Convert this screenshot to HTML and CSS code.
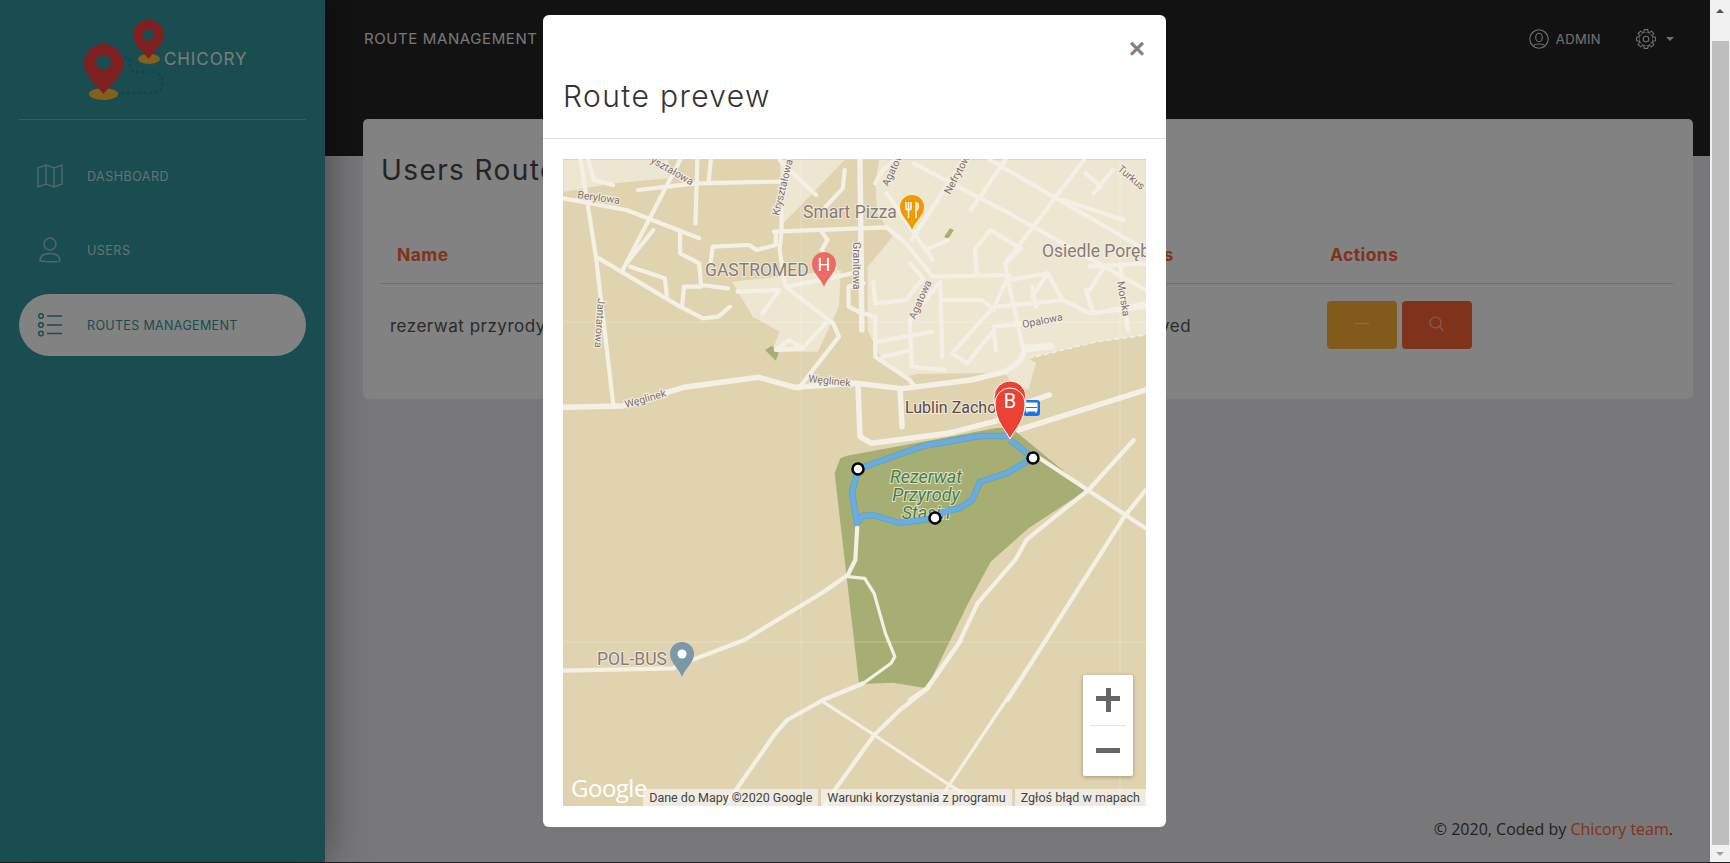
FILE: index.html
```html
<!DOCTYPE html>
<html lang="pl">
<head>
  <meta charset="UTF-8" />
  <title>Chicory - Routes management</title>
  <link rel="stylesheet" href="styles.css">
</head>
<body>
  <div class="window">
    <div class="app">
      <aside class="sidebar">
        <div class="logo">
          <svg class="logo-mark" viewBox="84 20 82 80" width="82" height="80">
            <path class="logo-dots" d="M124 58C134 54 126 71 136 72H154C166 73 166 92 152 93H122"/>
            <ellipse class="logo-base" cx="103.500" cy="94" rx="14.500" ry="6"/>
            <ellipse class="logo-base" cx="149" cy="59" rx="11" ry="5"/>
            <path class="logo-pin" d="M103.500 44C114.500 44 123.500 53 123.500 64C123.500 74 110 86 103.500 94C97 86 84 74 84 64C84 53 92.500 44 103.500 44ZM103.500 55A7.500 7.500 0 1 0 103.500 70A7.500 7.500 0 1 0 103.500 55Z"/>
            <path class="logo-pin" d="M148.500 20C157 20 164 27 164 35C164 44 154 52 148.500 59C143 52 133 44 133 35C133 27 140 20 148.500 20ZM148.500 29.500A5.500 5.500 0 1 0 148.500 40.500A5.500 5.500 0 1 0 148.500 29.500Z"/>
          </svg>
          <span class="logo-name">CHICORY</span>
        </div>
        <nav class="side-nav">
          <a class="side-link">
            <svg class="side-icon" viewBox="0 0 26 24"><path d="M1 4 9 1 17 4 25 1V20L17 23 9 20 1 23ZM9 1V20M17 4V23"/></svg>
            DASHBOARD
          </a>
          <a class="side-link">
            <svg class="side-icon" viewBox="0 0 26 26"><circle cx="13" cy="7" r="6"/><path d="M3 24C3 18 8 16.500 13 16.500C18 16.500 23 18 23 24C23 25 8 25 3 24Z"/></svg>
            USERS
          </a>
          <a class="side-link active">
            <svg class="side-icon" viewBox="0 0 26 26"><circle cx="4" cy="4" r="2.300"/><circle cx="4" cy="13" r="2.300"/><circle cx="4" cy="21.500" r="2.300"/><path d="M10 4H25M10 13H25M10 21.500H25"/></svg>
            ROUTES MANAGEMENT
          </a>
        </nav>
      </aside>

      <main class="main">
        <header class="topbar">
          <span class="topbar-title">ROUTE MANAGEMENT</span>
          <div class="topbar-right">
            <span class="topbar-user">
              <svg class="top-icon" viewBox="0 0 20 20"><circle cx="10" cy="10" r="9.200"/><ellipse cx="10" cy="8.500" rx="3.300" ry="4.200"/><path d="M4.500 16.500C6 14.500 14 14.500 15.500 16.500"/></svg>
              ADMIN
            </span>
            <span class="topbar-gear">
              <svg class="top-icon" viewBox="0 0 20 20">
                <defs><path id="tooth" d="M7.800 3.200 8.300 .6H11.700L12.200 3.200"/></defs>
                <circle cx="10" cy="10" r="7"/><circle cx="10" cy="10" r="2.800"/>
                <use href="#tooth" class="gear-tooth"/>
                <use href="#tooth" class="gear-tooth" transform="rotate(45 10 10)"/>
                <use href="#tooth" class="gear-tooth" transform="rotate(90 10 10)"/>
                <use href="#tooth" class="gear-tooth" transform="rotate(135 10 10)"/>
                <use href="#tooth" class="gear-tooth" transform="rotate(180 10 10)"/>
                <use href="#tooth" class="gear-tooth" transform="rotate(225 10 10)"/>
                <use href="#tooth" class="gear-tooth" transform="rotate(270 10 10)"/>
                <use href="#tooth" class="gear-tooth" transform="rotate(315 10 10)"/>
              </svg>
              <i class="caret"></i>
            </span>
          </div>
        </header>

        <section class="card">
          <h2 class="card-title">Users Routes</h2>
          <table class="routes">
            <thead>
              <tr><th class="col-name">Name</th><th class="col-status">Status</th><th>Actions</th></tr>
            </thead>
            <tbody>
              <tr>
                <td>rezerwat przyrody Stasin</td>
                <td>Approved</td>
                <td class="actions">
                  <button class="btn btn-yellow"><svg viewBox="0 0 16 16"><path d="M1 7.500H15"/></svg></button>
                  <button class="btn btn-red"><svg viewBox="0 0 16 16"><circle cx="6.500" cy="6.500" r="5.500"/><path d="M10.500 10.500 14.500 15"/></svg></button>
                </td>
              </tr>
            </tbody>
          </table>
        </section>

        <footer class="footer">© 2020, Coded by <a class="footer-link">Chicory team</a>.</footer>
      </main>

      <div class="backdrop"></div>

      <div class="modal">
        <div class="modal-header">
          <span class="modal-close">×</span>
          <h3 class="modal-title">Route prevew</h3>
        </div>
        <div class="modal-body">
          <div class="map">
            <svg class="map-svg" viewBox="563 159 583 647" width="583" height="647">
              <defs>
                <path id="pin" d="M0 35C-3 26-12 21-12 12A12 12 0 0 1 12 12C12 21 3 26 0 35Z"/>
              </defs>
              <rect class="land" x="563" y="159" width="583" height="647"/>

              <g transform="translate(550 150) scale(.3827 .3333)">
                <path class="urban" d="M35 30H310V85L170 100 35 125Z"/>
                <path class="urban" d="M600 30H770L720 90 610 220Z"/>
                <path class="urban" d="M475 395 760 360 755 470 700 605H580L600 545 530 500Z"/>
                <path class="urban" d="M860 30H1557V555L1430 575 1250 625 1270 640 1250 720 1200 690 1190 668 960 672 930 680 870 640 830 540V350L895 260 855 190 850 100Z"/>
                <path class="patch" d="M1030 260 1045 235 1055 240 1040 268Z"/>
                <path class="patch" d="M562 600 580 587 597 610 590 632Z"/>
                <path class="dash" d="M1250 625 1430 575 1557 555"/>

                <path class="road major" d="M35 772 190 768 350 712 545 682 640 712 800 700 920 716 1100 690 1190 665 1230 630 1240 600 1310 590"/>
                <path class="road major" d="M810 30 815 540"/>
                <path class="road" d="M585 245 880 232 930 280 1000 380 1200 375 1160 470 1050 610 1090 640 1160 540"/>
                <path class="road" d="M605 180V245L600 300 615 410 740 520 755 560 650 715"/>
                <path class="road" d="M35 145 200 180 390 265"/>
                <path class="road" d="M80 30 120 320 165 760"/>
                <path class="road" d="M120 320 340 470 400 505 440 500 470 470"/>
                <path class="road" d="M340 30 190 360"/>
                <path class="road" d="M100 30 115 90 165 105"/>
                <path class="road" d="M230 120 380 100 600 95M385 30 380 220M420 30 415 95"/>
                <path class="road" d="M600 30 695 135M770 60 765 115 720 170"/>
                <path class="road" d="M340 245V310L390 340 395 410 350 410 345 470M395 405 465 415M420 335 425 290 520 285 540 300 590 285V245"/>
                <path class="road" d="M710 245 725 270 710 300 745 355M620 410 790 370"/>
                <path class="road" d="M490 425 600 420 555 490M720 520 660 595 590 600 625 570 660 595M200 340 270 240M210 350 300 385 305 435"/>
                <path class="road" d="M1190 30 1100 180M1080 30 945 270M1395 30 1190 340 1195 380 1235 590"/>
                <path class="road" d="M950 40 1200 190 1557 420M1150 30 1557 300M880 130 1000 330M850 100 870 60 900 30"/>
                <path class="road" d="M1020 400 1025 620M1030 450H1130L1160 480M1020 395 940 510 945 650 1030 660M845 395 850 460 930 450 975 385 940 340"/>
                <path class="road" d="M1160 545 1165 600M1160 530 1240 520M1240 530 1330 505M1200 390 1300 370 1340 450M1260 410 1270 470M1170 470 1340 450 1410 490 1557 470"/>
                <path class="road" d="M1490 340 1510 540M1400 420 1420 490 1557 460M1410 350 1557 340M1150 240 1110 300 1115 370M1150 240 1230 295 1190 340M980 300 1040 270"/>
                <path class="road" d="M820 400 780 410V470L815 490M820 490 850 500V620L940 690 950 705M855 575 1000 545M870 620 945 600"/>
                <path class="road" d="M1470 60 1420 130M1400 70 1440 110M1340 150 1500 210"/>
                <path class="road" d="M1300 370 1260 440M1410 420 1450 350M1240 590 1310 585"/>
                <path class="road major" d="M805 710 810 860 840 880 1040 850 1210 800"/>
                <path class="road major" d="M915 720 920 830M1240 760 1305 735M1210 845 1557 720"/>
              </g>

              <g transform="translate(560 440) scale(.3762 .3333)">
                <path class="park" d="M745 55 760 48 1161 -36 1200 -36 1400 150 1245 265 1145 365 1085 490 975 745 885 728 795 732 730 100Z"/>
                <path class="road" d="M1255 40 1557 265"/>
                <path class="road" d="M1525 0 1405 150 1310 235 1240 300 1210 360 1110 490 1060 610 975 745 930 780"/>
                <path class="road" d="M1557 150 1500 230 1190 780"/>
                <path class="road" d="M790 262 785 360 765 405 695 460 490 600 340 665 300 685 8 692"/>
                <path class="road thin" d="M765 410 810 415 835 460 865 580 890 650 880 670 800 735 700 780"/>
              </g>

              <g transform="translate(550 640) scale(.3954 .3333)">
                <path class="road" d="M790 130 690 180 600 240 570 280 470 450 440 497"/>
                <path class="road thin" d="M690 185 820 285 1010 435 1100 497"/>
                <path class="road" d="M1040 0 955 145 885 210 820 285 720 450 695 497"/>
                <path class="road thin" d="M1255 0 1010 435 975 497"/>
              </g>

              <path class="tile" d="M801 159V806M1120 159V806M563 322H1146M563 642H1146"/>

              <text class="street" transform="translate(626 408) rotate(-16)">Węglinek</text>
              <text class="street" transform="translate(808 382) rotate(6)">Węglinek</text>
              <text class="street" transform="translate(779 216) rotate(-76)">Kryształowa</text>
              <text class="street" transform="translate(650 162) rotate(30)">yształowa</text>
              <text class="street" transform="translate(577 198) rotate(8)">Berylowa</text>
              <text class="street" transform="translate(598 298) rotate(94)">Jantarowa</text>
              <text class="street" transform="translate(853 242) rotate(90)">Granitowa</text>
              <text class="street" transform="translate(888 187) rotate(-64)">Agatowa</text>
              <text class="street" transform="translate(915 320) rotate(-66)">Agatowa</text>
              <text class="street" transform="translate(950 195) rotate(-62)">Nefrytowa</text>
              <text class="street" transform="translate(1117 170) rotate(40)">Turkus</text>
              <text class="street" transform="translate(1023 328) rotate(-11)">Opalowa</text>
              <text class="street" transform="translate(1117 282) rotate(80)">Morska</text>

              <text class="place" x="803" y="218">Smart Pizza</text>
              <text class="place" x="705" y="276">GASTROMED</text>
              <text class="place" x="1042" y="257">Osiedle Poręb</text>
              <text class="place" x="597" y="665">POL-BUS</text>
              <text class="place dark" x="905" y="413">Lublin Zacho</text>
              <text class="nature" x="926" y="483">Rezerwat</text>
              <text class="nature" x="926" y="501">Przyrody</text>
              <text class="nature" x="926" y="519">Stasin</text>

              <use href="#pin" x="912" y="195" class="pin-food"/>
              <path class="pin-glyph" d="M906 202V209.500M908.500 202V209.500M911 202V209.500M906 209.500H911M908.500 209.500V218M916 202V218M916 202C919 204 919 209 916 211"/>
              <use href="#pin" x="824" y="252" class="pin-health"/>
              <text class="pin-letter" x="824" y="271">H</text>
              <use href="#pin" x="682" y="642" class="pin-transit"/>
              <circle cx="682" cy="654" r="4.500" fill="#fff"/>

              <rect x="1023" y="400" width="17" height="16" rx="3" fill="#1a73e8"/>
              <path d="M1026 403H1037V411H1026ZM1027 411V413M1036 411V413" fill="#fff" stroke="#fff" stroke-width="1"/>
              <path d="M1026 407.500H1037" stroke="#1a73e8" stroke-width="1"/>

              <path class="route-edge" d="M1010 436H980L923 446 858 469 852 493 857 523 862 516 873 515 900 523 935 518 943 512 960 508 972 500 980 482 1007 473 1033 458 1010 440"/>
              <path class="route" d="M1010 436H980L923 446 858 469 852 493 857 523 862 516 873 515 900 523 935 518 943 512 960 508 972 500 980 482 1007 473 1033 458 1010 440"/>
              <circle class="waypoint" cx="858" cy="469" r="5.500"/>
              <circle class="waypoint" cx="1033" cy="458" r="5.500"/>
              <circle class="waypoint" cx="935" cy="518" r="5.500"/>

              <path class="pin-route" d="M1010 439C1006 426 994 419 994 397A16 16 0 0 1 1026 397C1026 419 1014 426 1010 439Z"/>
              <path class="pin-route" d="M1010 439C1006 430 995 422 995 403A15 15 0 0 1 1025 403C1025 422 1014 430 1010 439Z"/>
              <text class="pin-letter big" x="1010" y="408">B</text>

              <text class="google" x="571" y="797">Google</text>
            </svg>

            <div class="map-zoom">
              <span class="zoom-btn zoom-in"></span>
              <span class="zoom-btn zoom-out"></span>
            </div>
            <div class="map-credits">
              <span>Dane do Mapy ©2020 Google</span>
              <span>Warunki korzystania z programu</span>
              <span>Zgłoś błąd w mapach</span>
            </div>
          </div>
        </div>
      </div>
    </div>

    <div class="scrollbar">
      <i class="scroll-up"></i>
      <div class="scroll-thumb"></div>
      <i class="scroll-down"></i>
    </div>
  </div>
</body>
</html>
```

FILE: styles.css
```css
html, body { margin: 0; padding: 0; height: 100%; overflow: hidden; }
body { font-family: Inter, "Liberation Sans", sans-serif; color: #474747; background: #ebebef; }

.window { display: flex; height: 862px; border-bottom: 1px solid #222; }
.app { flex: 1; display: flex; position: relative; min-width: 0; }

/* sidebar */
.sidebar { width: 325px; flex: none; background: #33979b; padding: 0 19px; box-sizing: border-box; box-shadow: 0 0 40px rgba(0,0,0,.45); position: relative; z-index: 1; }
.logo { display: flex; height: 120px; box-sizing: border-box; border-bottom: 1px solid rgba(255,255,255,.3); margin: 0; padding: 20px 0 0 65px; }
.logo-mark { flex: none; }
.logo-pin { fill: #f8403f; fill-rule: evenodd; }
.logo-base { fill: #ffbe3a; }
.logo-dots { fill: none; stroke: #1f86ad; stroke-width: 2.500; stroke-dasharray: 2.500 3; }
.logo-name { margin: 29px 0 0 -2px; font-size: 17px; line-height: 20px; color: #fff; opacity: .9; letter-spacing: .9px; }

.side-nav { display: flex; flex-direction: column; }
.side-link { display: flex; align-items: center; height: 62px; margin-top: 12px; padding-left: 18px; border-radius: 31px; font-size: 12.500px; letter-spacing: .5px; color: rgba(255,255,255,.72); }
.side-link:first-child { margin-top: 25px; }
.side-link.active { margin-top: 13px; background: #fff; color: #33979b; letter-spacing: .35px; }
.side-icon { width: 26px; height: 26px; margin-right: 24px; fill: none; stroke: rgba(255,255,255,.5); stroke-width: 1.500; }
.active .side-icon { stroke: #33979b; }

/* main column */
.main { flex: 1; display: flex; flex-direction: column; min-width: 0; }
.topbar { height: 156px; flex: none; box-sizing: border-box; background: #252525; display: flex; justify-content: space-between; padding: 29px 36px 0 39px; color: #fff; }
.topbar-title { font-size: 15px; line-height: 20px; letter-spacing: .6px; opacity: .9; }
.topbar-right { display: flex; gap: 35px; height: 20px; font-size: 13px; letter-spacing: .35px; }
.topbar-user, .topbar-gear { display: flex; align-items: center; gap: 7px; opacity: .85; }
.top-icon { width: 20px; height: 20px; fill: none; stroke: #fff; stroke-width: 1.100; }
.gear-tooth { fill: #252525; }
.caret { width: 0; height: 0; margin-left: 3px; border: 4px solid transparent; border-top-color: #fff; border-bottom: 0; }

.card { height: 280px; flex: none; box-sizing: border-box; margin: -37px 17px 0 38px; padding: 34px 20px 0 18px; background: #fff; border-radius: 5px; }
.card-title { margin: 0 0 46px; font-size: 28px; line-height: 34px; font-weight: 400; letter-spacing: 1.4px; white-space: nowrap; }
.routes { width: 100%; table-layout: fixed; border-collapse: collapse; }
.routes th { text-align: left; padding: 11px 16px 17px; font-size: 17.500px; line-height: 22px; font-weight: 700; letter-spacing: .4px; color: #fb6435; border-bottom: 1px solid #d8d8d8; }
.col-name { width: 687px; }
.col-status { width: 182px; }
.routes td { padding: 18px 9px 16px; font-size: 17px; line-height: 24px; letter-spacing: .5px; color: #555; white-space: nowrap; }
.routes td.actions { padding: 17px 9px 17px 13px; display: flex; gap: 5px; }
.btn { width: 70px; height: 48px; padding: 0; border: 0; border-radius: 4px; display: flex; align-items: center; justify-content: center; }
.btn svg { width: 16px; height: 16px; margin-bottom: 3px; fill: none; stroke: rgba(255,255,255,.55); stroke-width: 1.200; }
.btn-yellow { background: #ffb237; }
.btn-red { background: #fb6435; }

.footer { margin-top: auto; padding: 0 37px 22px 0; text-align: right; font-family: "Open Sans", sans-serif; font-size: 16px; line-height: 22px; color: #444; }
.footer-link { color: #fb6435; }

/* modal */
.backdrop { position: absolute; inset: 0; background: rgba(0,0,0,.49); z-index: 2; }
.modal { position: absolute; left: 543px; top: 15px; width: 623px; height: 812px; background: #fff; border-radius: 6px; z-index: 3; display: flex; flex-direction: column; }
.modal-header { height: 124px; flex: none; box-sizing: border-box; border-bottom: 1px solid #dee2e6; padding: 20px 21px 0; display: flex; flex-direction: column; }
.modal-close { align-self: flex-end; font-family: "Liberation Sans", sans-serif; font-size: 28px; font-weight: 700; line-height: 28px; color: #808080; }
.modal-title { margin: 15px 0 0 -1px; font-size: 30px; line-height: 36px; font-weight: 300; letter-spacing: 1.4px; color: #333; }
.modal-body { padding: 20px; }

/* map */
.map { position: relative; width: 583px; height: 647px; overflow: hidden; }
.map-svg { display: block; }
.land { fill: #dfd3b0; }
.urban { fill: #ede6d1; }
.park { fill: #a6ae74; }
.patch { fill: #a6ae74; }
.dash { fill: none; stroke: #f4f0e5; stroke-width: 1.500; stroke-dasharray: 5 3; vector-effect: non-scaling-stroke; }
.tile { fill: none; stroke: rgba(255,255,255,.28); stroke-width: 1; }
.road { fill: none; stroke: #f4f0e5; stroke-width: 4.200; stroke-linejoin: round; stroke-linecap: round; vector-effect: non-scaling-stroke; }
.road.major { stroke-width: 5.500; }
.road.thin { stroke-width: 3.200; }
.street { font-family: Roboto, sans-serif; font-size: 10.500px; fill: #7f6f68; stroke: #f4f0e5; stroke-width: 2px; paint-order: stroke; }
.place { font-family: Roboto, sans-serif; font-size: 17.500px; fill: #8a7b74; stroke: rgba(244,240,229,.8); stroke-width: 2px; paint-order: stroke; }
.place.dark { font-size: 16px; fill: #5b4a4a; }
.nature { font-family: Roboto, sans-serif; font-size: 18px; font-style: italic; text-anchor: middle; fill: #4c7c48; stroke: rgba(240,240,215,.8); stroke-width: 2px; paint-order: stroke; }
.pin-food { fill: #f29900; }
.pin-health { fill: #ec6a63; }
.pin-transit { fill: #7b98a8; }
.pin-glyph { fill: none; stroke: #fff; stroke-width: 1.500; }
.pin-letter { font-family: Roboto, sans-serif; font-size: 18px; fill: #fff; text-anchor: middle; }
.pin-letter.big { font-size: 20px; }
.route-edge { fill: none; stroke: #4f8fc0; stroke-width: 6.500; stroke-linejoin: round; opacity: .55; }
.route { fill: none; stroke: #64ade6; stroke-width: 5; stroke-linejoin: round; }
.waypoint { fill: #fff; stroke: #000; stroke-width: 2.500; }
.pin-route { fill: #ea4335; stroke: #fff; stroke-width: 1; }
.google { font-family: "Open Sans", sans-serif; font-size: 24px; font-weight: 500; fill: #fff; letter-spacing: -.5px; }

.map-zoom { position: absolute; left: 520px; top: 516px; width: 50px; height: 101px; background: #fff; border-radius: 2px; box-shadow: 0 1px 4px rgba(0,0,0,.3); }
.zoom-btn { display: block; height: 50px; position: relative; }
.zoom-in::before, .zoom-in::after, .zoom-out::before { content: ""; position: absolute; background: #666; }
.zoom-in::before, .zoom-out::before { left: 13px; width: 24px; height: 5px; top: 22px; }
.zoom-in::after { left: 23px; width: 5px; height: 24px; top: 13px; }
.zoom-in { border-bottom: 1px solid #e6e6e6; margin: 0 7px; }
.zoom-in::before { left: 6px; top: 21px; }
.zoom-in::after { left: 16px; }

.map-credits { position: absolute; right: 0; bottom: 0; display: flex; gap: 3px; font-family: Roboto, sans-serif; font-size: 12.500px; line-height: 17px; color: #444; white-space: nowrap; }
.map-credits span { background: rgba(245,245,245,.7); padding: 0 6px; }

/* fake browser scrollbar */
.scrollbar { width: 20px; flex: none; background: #f1f1f1; display: flex; flex-direction: column; align-items: center; position: relative; z-index: 4; }
.scroll-thumb { flex: 1; width: 17px; margin: 0 1px; background: #bebebe; }
.scroll-up, .scroll-down { width: 0; height: 0; border: 4.500px solid transparent; }
.scroll-up { border-bottom-color: #505050; border-top: 0; margin: 9px 0 28px; }
.scroll-down { border-top-color: #a3a3a3; border-bottom: 0; margin: 7px 0 6px; }
```
